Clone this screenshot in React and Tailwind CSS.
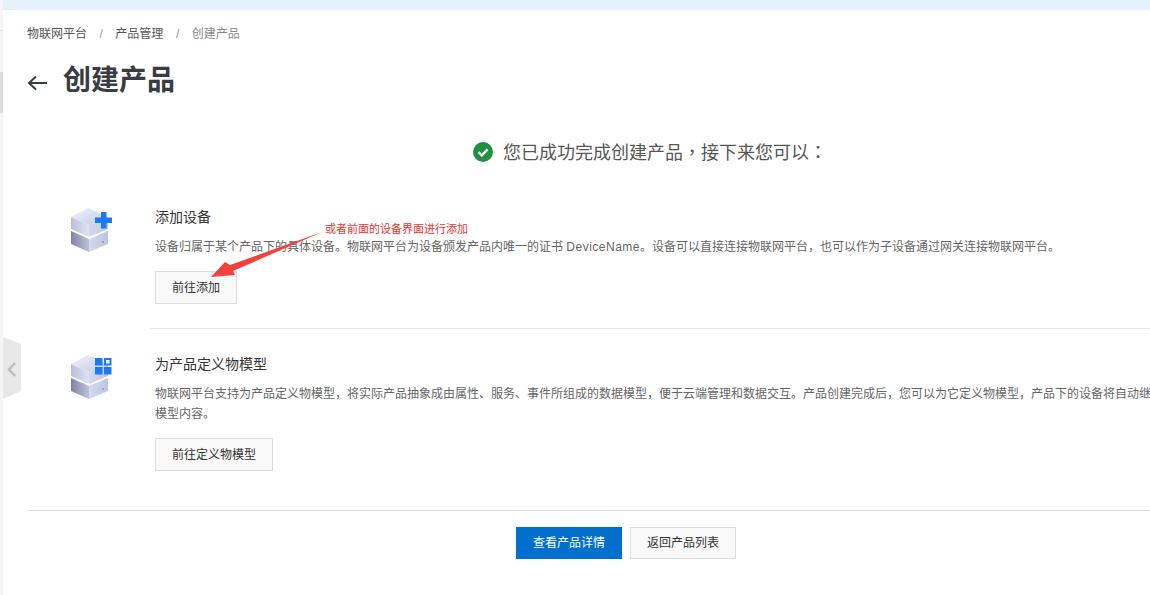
import React from "react";

const FONT = { fontFamily: '"Liberation Sans", "Noto Sans CJK SC", sans-serif' };

function Stack({ children, id }) {
  return (
    <svg width="42" height="44" viewBox="0 0 42 44" className="block">
      <defs>
        <linearGradient id={`${id}a`} x1="0" y1="0" x2="1" y2="1">
          <stop offset="0" stopColor="#f0f2f9" />
          <stop offset="1" stopColor="#c3cbe6" />
        </linearGradient>
        <linearGradient id={`${id}b`} x1="0" y1="0" x2="1" y2="0">
          <stop offset="0" stopColor="#b9bfd8" />
          <stop offset="1" stopColor="#dfe3f3" />
        </linearGradient>
        <linearGradient id={`${id}c`} x1="0" y1="0" x2="1" y2="0">
          <stop offset="0" stopColor="#d3d9ee" />
          <stop offset="1" stopColor="#bcc5e2" />
        </linearGradient>
        <linearGradient id={`${id}d`} x1="0" y1="0" x2="1" y2="0">
          <stop offset="0" stopColor="#7f85a2" />
          <stop offset="1" stopColor="#bcc2d8" />
        </linearGradient>
      </defs>
      <path d="M0 23 L18 31 V44 L0 36 Z" fill={`url(#${id}d)`} />
      <path d="M18 31 L37 23 V36 L18 44 Z" fill={`url(#${id}c)`} />
      <path d="M0 9 L17 0 L37 9 L18 17 Z" fill={`url(#${id}a)`} />
      <path d="M0 9 L18 17 V29 L0 21 Z" fill={`url(#${id}b)`} />
      <path d="M18 17 L37 9 V21 L18 29 Z" fill={`url(#${id}c)`} />
      <circle cx="32" cy="34" r="1" fill="#8f97b5" />
      {children}
    </svg>
  );
}

function Row({ title, desc, action, icon }) {
  return (
    <div className="flex">
      <div className="w-[128px] shrink-0 pl-[44px] pt-px">{icon}</div>
      <div className="min-w-0 flex-1">
        <div className="text-[14px] leading-[20px] text-[#333]">{title}</div>
        <div className="mt-[10px] whitespace-nowrap text-[12px] leading-[20px] text-[#666]">{desc}</div>
        <button className="mt-[14px] h-[33px] border border-[#dedede] bg-[#f9f9f9] px-[16px] text-[12px] text-[#333]">
          {action}
        </button>
      </div>
    </div>
  );
}

export default function App() {
  return (
    <div className="relative flex h-[595px] w-[1150px] overflow-hidden bg-white" style={FONT}>
      <div className="flex w-[3px] shrink-0 flex-col bg-[#f5f5f5]">
        <div className="mt-[30px] h-px bg-[#e4e4e4]" />
        <div className="mt-[41px] h-[41px] bg-[#dedede]" />
      </div>
      <div className="min-w-0 flex-1">
        <div className="h-[10px] bg-[#e5f2fd]" />
        <div className="pl-[24px]">
          <div className="mt-[15px] flex h-[18px] items-center text-[12px] text-[#555]">
            <span>物联网平台</span>
            <span className="mx-[12.5px] text-[#999]">/</span>
            <span>产品管理</span>
            <span className="mx-[12.5px] text-[#999]">/</span>
            <span className="text-[#888]">创建产品</span>
          </div>
          <div className="mt-[13px] flex h-[50px] items-center">
            <svg width="20" height="16" viewBox="0 0 20 16" fill="none" stroke="#373d41" strokeWidth="2" className="mt-[3px]">
              <path d="M20 8H2M9 1.5 2 8l7 6.5" />
            </svg>
            <h1 className="ml-[16px] text-[28px] leading-none font-bold text-[#373d41]">创建产品</h1>
          </div>
          <div className="mt-[30px] flex h-[32px] items-center pl-[446px] text-[18px] text-[#555]">
            <svg width="20" height="20" viewBox="0 0 20 20">
              <circle cx="10" cy="10" r="10" fill="#1f9142" />
              <path d="M5.5 10.2 8.8 13.3 14.6 7.4" fill="none" stroke="#fff" strokeWidth="2.4" />
            </svg>
            <span className="ml-[10px]">
              您已成功完成创建产品<span className="font-['Noto_Sans_CJK_TC']">，</span>接下来您可以<span className="font-['Noto_Sans_CJK_TC']">：</span>
            </span>
          </div>
          <div className="mt-[39px]">
            <Row
              title="添加设备"
              icon={
                <Stack id="s1">
                  <path d="M30 4h5.5v5.5H41V15h-5.500v5.500H30V15h-6V9.500h6z" fill="#1b7af0" />
                </Stack>
              }
              desc={
                <>
                  设备归属于某个产品下的具体设备。物联网平台为设备颁发产品内唯一的证书 <span className="tracking-[0.5px]">DeviceName</span>。设备可以直接连接物联网平台，也可以作为子设备通过网关连接物联网平台。
                </>
              }
              action="前往添加"
            />
            <div className="ml-[123px] mt-[24px] h-px bg-[#e8e8e8]" />
            <div className="mt-[25px]">
              <Row
                title="为产品定义物模型"
                icon={
                  <Stack id="s2">
                    <g fill="#1b7af0">
                      <rect x="24" y="3" width="7.500" height="7.500" />
                      <rect x="33" y="3" width="7.500" height="7.500" />
                      <rect x="24" y="12" width="7.500" height="7.500" />
                      <rect x="33" y="12" width="7.500" height="7.500" />
                    </g>
                    <rect x="35" y="5" width="3.500" height="3.500" fill="#fff" />
                  </Stack>
                }
                desc={
                  <>
                    物联网平台支持为产品定义物模型，将实际产品抽象成由属性、服务、事件所组成的数据模型，便于云端管理和数据交互。产品创建完成后，您可以为它定义物模型，产品下的设备将自动继承
                    <br />
                    模型内容。
                  </>
                }
                action="前往定义物模型"
              />
            </div>
          </div>
          <div className="mt-[39px] h-px bg-[#e0e0e0]" />
          <div className="mt-[16px] flex pl-[489px]">
            <button className="h-[32px] w-[106px] bg-[#0070cc] text-[12px] text-white">查看产品详情</button>
            <button className="ml-[8px] h-[32px] w-[106px] border border-[#dedede] bg-[#f9f9f9] text-[12px] text-[#333]">
              返回产品列表
            </button>
          </div>
        </div>
      </div>

      <div className="absolute left-[3px] top-[337px]">
        <svg width="18" height="62" viewBox="0 0 18 62" className="block">
          <path d="M0 0 18 7V54L0 62Z" fill="#e8e8e8" />
          <path d="M12 26 6 32.500l6 6.500" fill="none" stroke="#bdbdbd" strokeWidth="2.500" />
        </svg>
      </div>

      <div className="absolute left-[325px] top-[222px] whitespace-nowrap text-[11px] leading-[14px] text-[#f5312f]">
        或者前面的设备界面进行添加
      </div>
      <svg className="absolute left-[210px] top-[230px]" width="116" height="50" viewBox="0 0 116 50">
        <path d="M112 2 20 35 15 32 1 47 25 45 23 41Z" fill="#f4413b" />
      </svg>
    </div>
  );
}
